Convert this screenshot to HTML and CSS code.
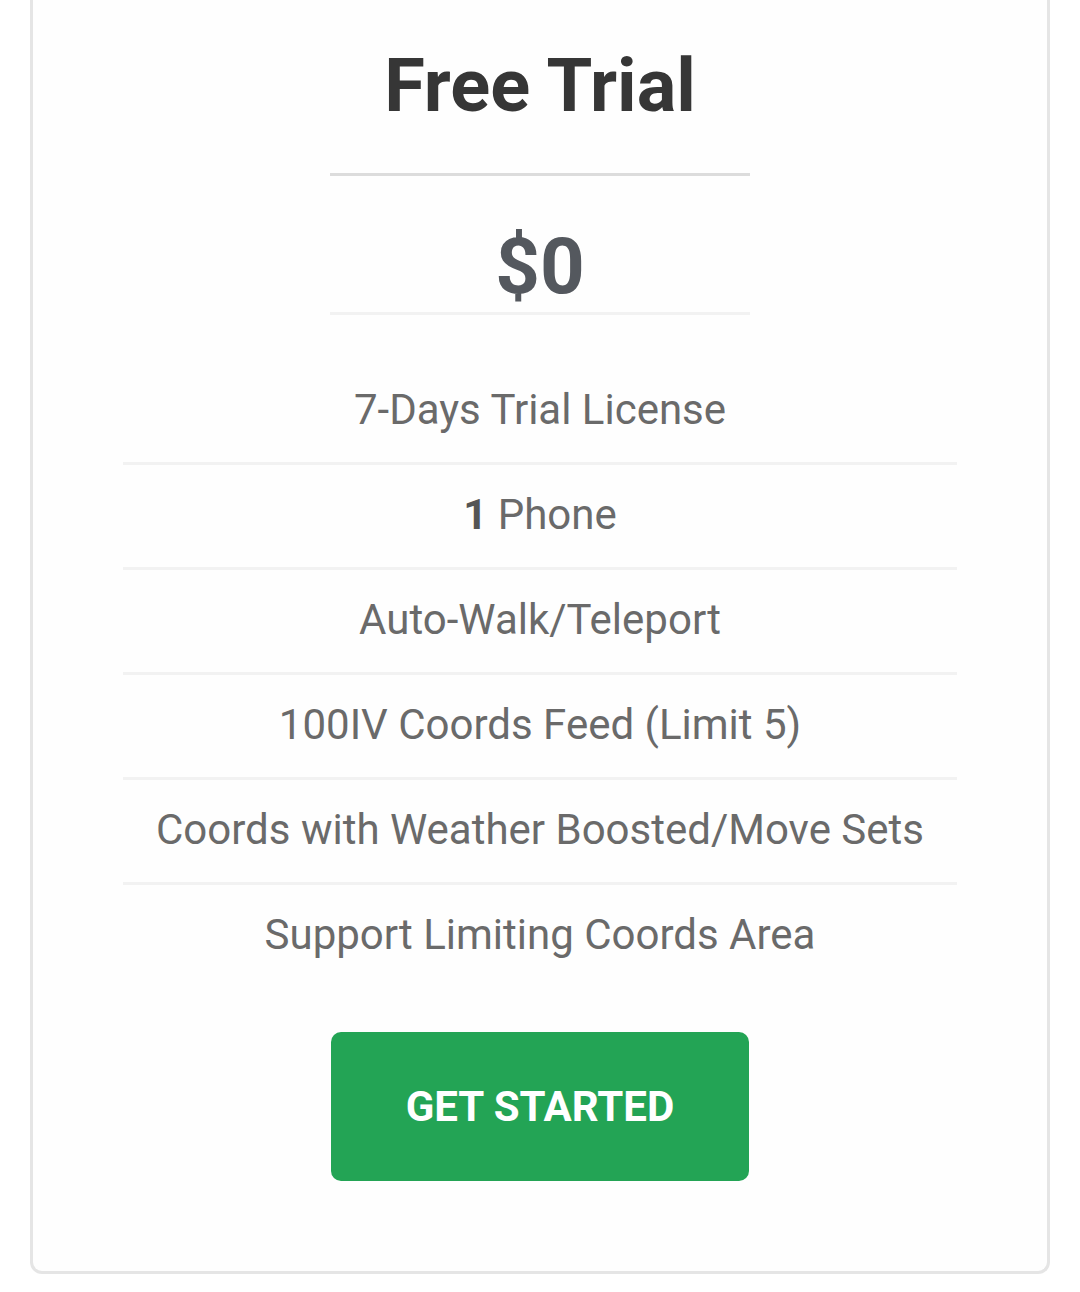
FILE: index.html
```html
<!DOCTYPE html>
<html lang="en">
<head>
    <meta charset="UTF-8">
    <title>Free Trial</title>
    <meta name="viewport" content="width=device-width, initial-scale=1.0">
    <link rel="stylesheet" href="styles.css">
</head>
<body>
    <div class="pricing-card">

        <div class="plan-header">
            <h1>Free Trial</h1>
        </div>

        <div class="plan-price">$0</div>

        <ul class="plan-features">
            <li>7-Days Trial License</li>
            <li><strong>1</strong> Phone</li>
            <li>Auto-Walk/Teleport</li>
            <li>100IV Coords Feed (Limit 5)</li>
            <li>Coords with Weather Boosted/Move Sets</li>
            <li>Support Limiting Coords Area</li>
        </ul>

        <div class="plan-action">
            <a href="#" class="button">GET STARTED</a>
        </div>
    </div>
</body>
</html>
```

FILE: styles.css
```css
body {
    font-family: Roboto, "Liberation Sans", Arial, sans-serif;
    margin: 0;
    padding: 0 30px 19px;
    background-color: #ffffff;
}

.pricing-card {
    background-color: #fefefe;
    border: 3px solid #e5e5e5;
    border-top: none;
    border-radius: 0 0 12px 12px;
    padding: 0 90px 90px;
    text-align: center;
}

.plan-header {
    width: 420px;
    margin: 0 auto;
    padding-top: 40px;
    border-bottom: 3px solid #dcdcdc;
}

.plan-header h1 {
    margin: 0;
    font-size: 74px;
    line-height: 92px;
    font-weight: 700;
    color: #363636;
    padding-bottom: 41px;
}

.plan-price {
    width: 420px;
    margin: 0 auto;
    padding: 49px 0 3px;
    font-size: 78px;
    line-height: 84px;
    font-weight: 700;
    color: #54585e;
    border-bottom: 3px solid #f2f2f2;
}

.plan-features {
    list-style: none;
    margin: 45px 0 0;
    padding: 0;
}

.plan-features li {
    font-size: 42px;
    line-height: 60px;
    color: #6a6a6a;
    padding: 20px 0 22px;
    border-bottom: 3px solid #f2f2f2;
}

.plan-features li:last-child {
    border-bottom: none;
}

.plan-features strong {
    color: #555;
}

.plan-action {
    margin-top: 45px;
}

.button {
    display: block;
    width: 418px;
    margin: 0 auto;
    padding: 44px 0;
    box-sizing: border-box;
    height: 149px;
    background-color: #23a455;
    border-radius: 10px;
    color: white;
    text-decoration: none;
    font-size: 42px;
    line-height: 61px;
    font-weight: 700;
}
```
